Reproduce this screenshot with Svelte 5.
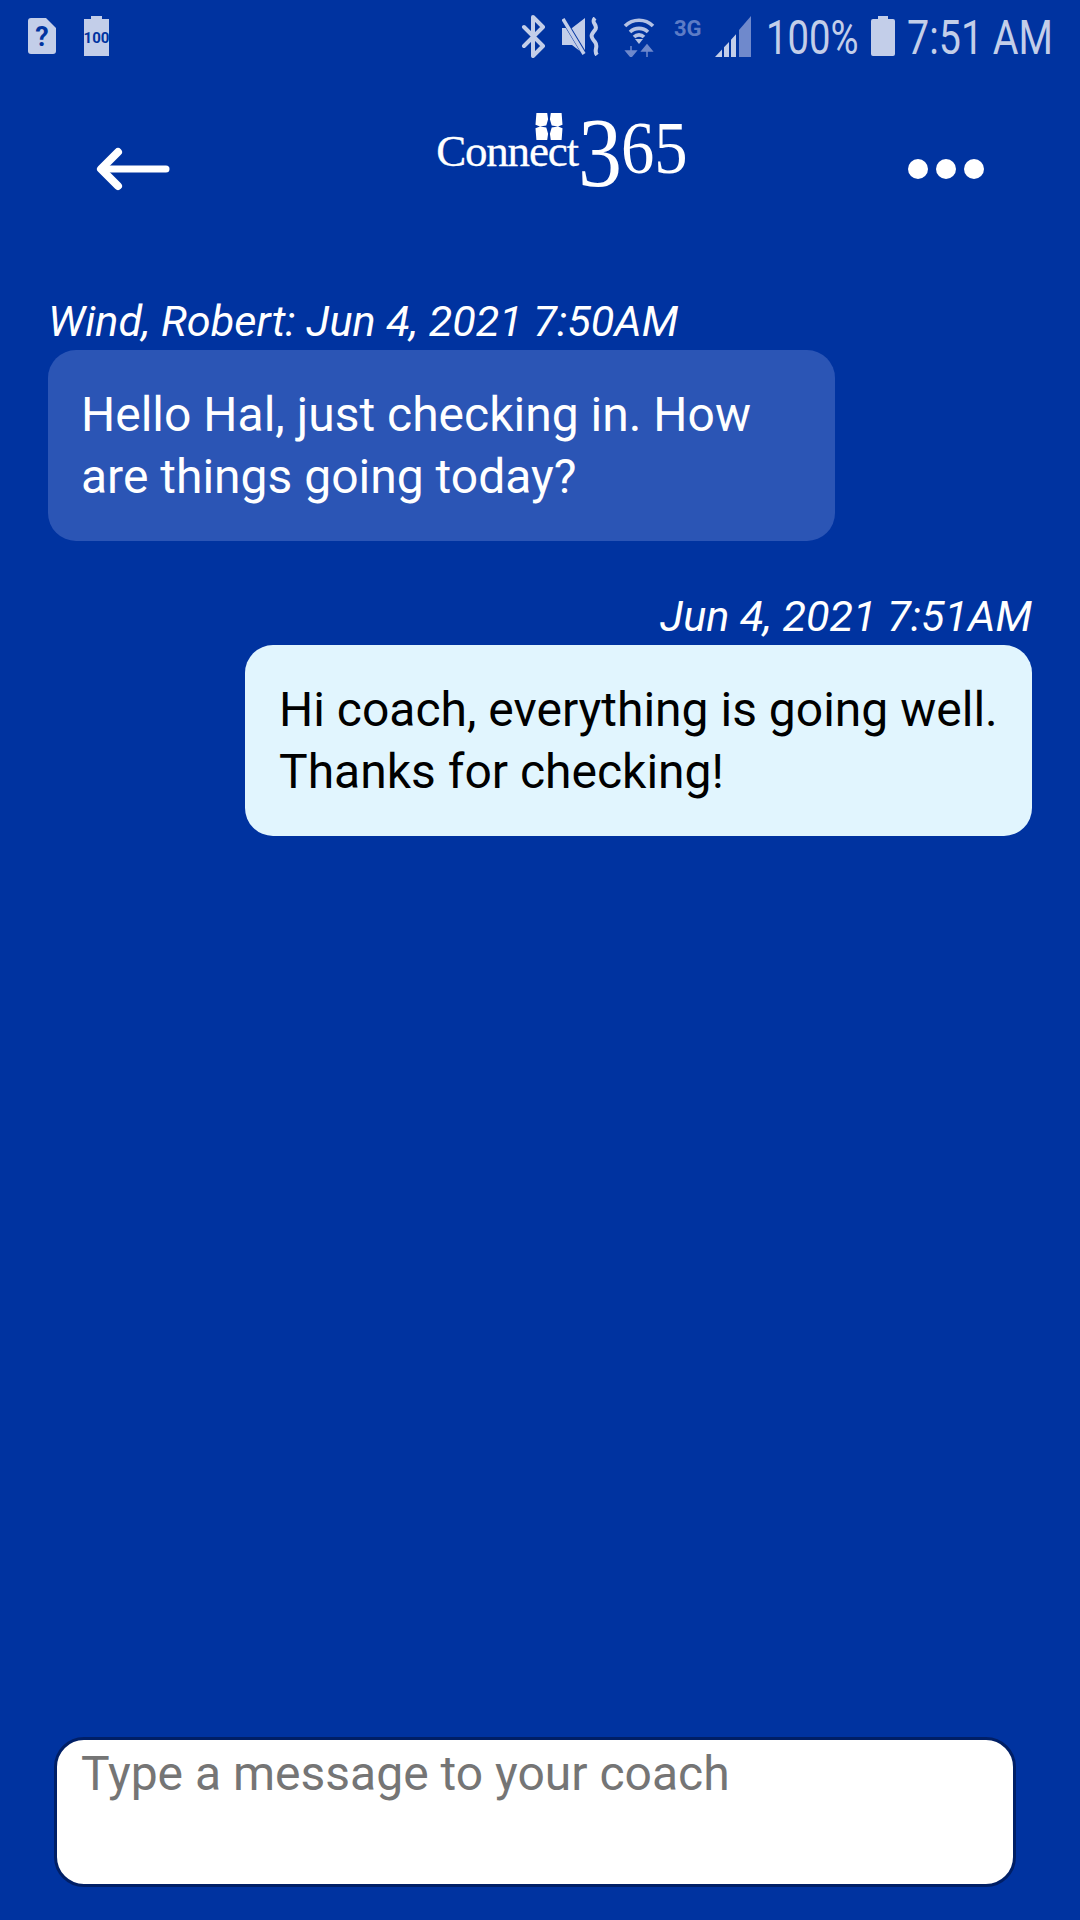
<script>
  const messages = [
    { id: 1, mine: false, label: 'Wind, Robert: Jun 4, 2021 7:50AM', lines: ['Hello Hal, just checking in. How', 'are things going today?'] },
    { id: 2, mine: true, label: 'Jun 4, 2021 7:51AM', lines: ['Hi coach, everything is going well.', 'Thanks for checking!'] }
  ];
</script>

<div class="screen">
  <div class="status-bar">
    <div class="status-left">
      <svg width="28" height="36" viewBox="0 0 28 36">
        <path d="M3 0h15l10 10v23a3 3 0 0 1-3 3H3a3 3 0 0 1-3-3V3a3 3 0 0 1 3-3z" fill="#c3cee9" />
        <text x="14" y="28" class="sim-mark">?</text>
      </svg>
      <svg width="25" height="40" viewBox="0 0 25 40">
        <path d="M7 0h11v3h7v37H0V3h7z" fill="#c3cee9" />
        <text x="12.5" y="27" class="batt-mark">100</text>
      </svg>
    </div>
    <div class="status-right">
      <svg width="25" height="43" viewBox="0 0 25 43">
        <path d="M3 12l19 19-10 10V2l10 10L3 31" fill="none" stroke="#c3cee9" stroke-width="4" stroke-linejoin="round" stroke-linecap="round" />
      </svg>
      <svg class="mute" width="38" height="39" viewBox="0 0 38 39">
        <path d="M0 11h10L23 1v37L10 28H0z" fill="#c3cee9" />
        <path d="M0 0l23 38" stroke="#0033a0" stroke-width="5" />
        <path d="M1 2l21 35" stroke="#c3cee9" stroke-width="3.5" />
        <path d="M33 1c-5 5 4 7 0 12s-5 6 0 12c4 5-2 8 2 13" fill="none" stroke="#c3cee9" stroke-width="4" />
      </svg>
      <svg class="wifi" width="32" height="41" viewBox="0 0 32 41">
        <path d="M2 10a20 20 0 0 1 28 0M7 16a13 13 0 0 1 18 0M11 21a7 7 0 0 1 10 0" fill="none" stroke="#b4c2e4" stroke-width="3.6" />
        <path d="M12 23h8l-4 5z" fill="#b4c2e4" />
        <path d="M8 30v7M3 35h10l-5 6z" fill="#6f89cc" stroke="#6f89cc" stroke-width="1.5" />
        <path d="M24 41v-8M19 35h10l-5-6z" fill="#6f89cc" stroke="#6f89cc" stroke-width="1.5" />
      </svg>
      <span class="net">3G</span>
      <svg class="signal" width="36" height="41" viewBox="0 0 36 38" preserveAspectRatio="none">
        <path d="M0 38l7-7v7zM9 38V29l5-5v14zM16 38V22l5-5v21z" fill="#c3cee9" />
        <path d="M24 38V13l12-13v38z" fill="#6f89cc" />
      </svg>
      <span class="status-text pct"><span>100%</span></span>
      <svg class="batt" width="24" height="40" viewBox="0 0 24 40">
        <path d="M7 0h10v3h5a2 2 0 0 1 2 2v33a2 2 0 0 1-2 2H2a2 2 0 0 1-2-2V5a2 2 0 0 1 2-2h5z" fill="#c3cee9" />
      </svg>
      <span class="status-text time"><span>7:51 AM</span></span>
    </div>
  </div>

  <header class="top-bar">
    <svg class="back" width="74" height="44" viewBox="0 0 74 44">
      <path d="M70 22H6" fill="none" stroke="#fff" stroke-width="7" stroke-linecap="round" />
      <path d="M22 5L5 22l17 17" fill="none" stroke="#fff" stroke-width="8" stroke-linecap="round" stroke-linejoin="round" />
    </svg>
    <div class="logo">
      <span class="logo-word">Connect</span><span class="logo-three">3</span><span class="logo-rest">65</span>
      <svg class="logo-mark" width="28" height="27" viewBox="0 0 30 30">
        <path d="M1 0h12l1 7-2 7-7 1-5-2zM29 0H17l-1 7 2 7 7 1 5-2zM1 30h12l1-7-2-7-7-1-5 2zM29 30H17l-1-7 2-7 7-1 5 2z" fill="#fff" />
      </svg>
    </div>
    <div class="dots"><i></i><i></i><i></i></div>
  </header>

  <main class="thread">
    {#each messages as m (m.id)}
      <div class="message" class:mine={m.mine}>
        <div class="stamp">{m.label}</div>
        <div class="bubble">
          {#each m.lines as line}
            <div>{line}</div>
          {/each}
        </div>
      </div>
    {/each}
  </main>

  <div class="composer">
    <textarea placeholder="Type a message to your coach"></textarea>
  </div>
</div>

<style>
  :global(body) {
    margin: 0;
    background: #0033a0;
  }

  .screen {
    width: 1080px;
    height: 1920px;
    display: flex;
    flex-direction: column;
    background: #0033a0;
    font-family: Roboto, "Liberation Sans", sans-serif;
    color: #fff;
    overflow: hidden;
  }

  .status-bar {
    height: 72px;
    padding: 0 28px;
    flex: none;
    display: flex;
    align-items: center;
    justify-content: space-between;
  }

  .status-left {
    display: flex;
    align-items: center;
    gap: 28px;
  }

  .status-right {
    display: flex;
    align-items: center;
  }

  .sim-mark {
    font: 700 27px Roboto, sans-serif;
    fill: #0033a0;
    text-anchor: middle;
  }

  .batt-mark {
    font: 700 15px Roboto, sans-serif;
    fill: #0033a0;
    text-anchor: middle;
  }

  .mute {
    margin-left: 16px;
  }

  .wifi {
    margin-left: 23px;
  }

  .net {
    font-size: 22px;
    font-weight: 700;
    color: #5d7cc6;
    margin: -16px 0 0 19px;
    width: 25px;
    white-space: nowrap;
  }

  .signal {
    margin-left: 16px;
  }

  .status-text {
    display: block;
    height: 58px;
    margin-top: 3px;
    font-size: 49px;
    line-height: 58px;
    color: #c3cee9;
  }

  .status-text span {
    display: block;
    white-space: nowrap;
    transform: scaleX(0.78);
    transform-origin: left center;
  }

  .pct {
    width: 90px;
    margin-left: 15px;
  }

  .batt {
    margin-left: 15px;
  }

  .time {
    width: 145px;
    margin-left: 12px;
  }

  .status-text.time span {
    transform: scaleX(0.805);
  }

  .top-bar {
    height: 194px;
    flex: none;
    display: flex;
    align-items: center;
    justify-content: space-between;
    padding: 0 96px;
  }

  .logo {
    position: relative;
    display: flex;
    align-items: baseline;
    font-family: "Liberation Serif", serif;
    margin: -72px 0 0 40px;
  }

  .logo-word {
    font-size: 45px;
    letter-spacing: -1.2px;
    -webkit-text-stroke: 0.3px #fff;
  }

  .logo-three {
    font-size: 100px;
    line-height: 1;
    position: relative;
    top: 20px;
    transform: scaleX(0.88);
    transform-origin: left center;
    margin-right: -7px;
  }

  .logo-rest {
    font-size: 74px;
    line-height: 1;
    position: relative;
    top: 7px;
    transform: scaleX(0.9);
    transform-origin: left center;
    margin-right: -13px;
  }

  .logo-mark {
    position: absolute;
    left: 99px;
    top: 30px;
  }

  .dots {
    display: flex;
    gap: 8px;
  }

  .dots i {
    width: 20px;
    height: 20px;
    border-radius: 50%;
    background: #fff;
  }

  .thread {
    flex: 1;
    display: flex;
    flex-direction: column;
    gap: 50px;
    padding: 30px 48px 0;
  }

  .message {
    display: flex;
    flex-direction: column;
    align-items: flex-start;
  }

  .message.mine {
    align-items: flex-end;
  }

  .stamp {
    font-size: 43.2px;
    font-style: italic;
    line-height: 52px;
    margin-bottom: 2px;
  }

  .bubble {
    width: 787px;
    box-sizing: border-box;
    padding: 34px 33px 33px;
    border-radius: 28px;
    background: #2b55b5;
    font-size: 48px;
    line-height: 62px;
    white-space: nowrap;
  }

  .mine .bubble {
    padding-left: 34px;
    background: #e1f5fe;
    color: #000;
  }

  .composer {
    flex: none;
    padding: 0 64px 33px 54px;
  }

  textarea {
    display: block;
    width: 100%;
    height: 150px;
    box-sizing: border-box;
    border: 3px solid #001f66;
    border-radius: 30px;
    padding: 6px 24px;
    resize: none;
    background: #fff;
    font-family: Roboto, "Liberation Sans", sans-serif;
    font-size: 48px;
    line-height: 56px;
    outline: none;
  }

  textarea::placeholder {
    color: #757575;
    opacity: 1;
  }
</style>
